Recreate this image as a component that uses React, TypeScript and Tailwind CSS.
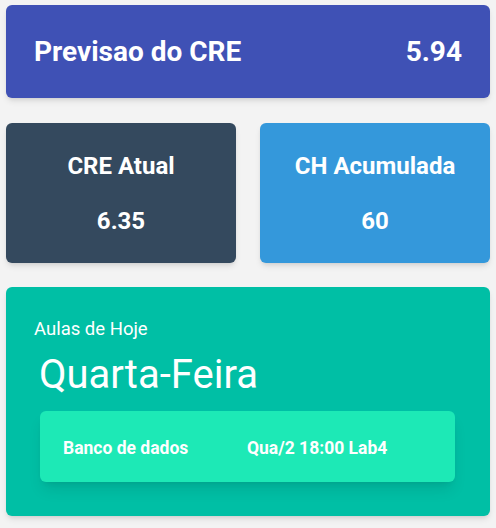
import React from "react";

const aulas = [{ nome: "Banco de dados", horario: "Qua/2 18:00 Lab4" }];

const App: React.FC = () => {
  return (
    <div className="min-h-[528px] w-[496px] bg-[#f3f3f3] px-[6px] pt-[5px] font-['Roboto',sans-serif] text-white">
      <div className="flex h-[93px] items-center justify-between rounded-md bg-[#3f51b5] pl-[28px] pr-[28px] shadow-md">
        <span className="text-[28px] font-bold">Previsao do CRE</span>
        <span className="text-[28px] font-bold">5.94</span>
      </div>

      <div className="mt-[25px] grid grid-cols-2 gap-[24px]">
        <div className="flex h-[140px] flex-col items-center rounded-md bg-[#34495e] pt-[29px] shadow-md">
          <span className="text-[24px] leading-[28px] font-bold">CRE Atual</span>
          <span className="mt-[27px] text-[24px] leading-[28px] font-bold">6.35</span>
        </div>
        <div className="flex h-[140px] flex-col items-center rounded-md bg-[#3498db] pt-[29px] shadow-md">
          <span className="text-[24px] leading-[28px] font-bold">CH Acumulada</span>
          <span className="mt-[27px] text-[24px] leading-[28px] font-bold">60</span>
        </div>
      </div>

      <div className="mt-[24px] h-[229px] rounded-md bg-[#00bfa5] pl-[28px] pr-[35px] pt-[30px] shadow-md">
        <div className="text-[18.5px] leading-[24px]">Aulas de Hoje</div>
        <div className="mt-[10px] pl-[5px] text-[40px] leading-[48px]">Quarta-Feira</div>
        <div className="mt-[12px] ml-[6px] space-y-2">
          {aulas.map((a) => (
            <div
              key={a.nome}
              className="flex h-[71px] items-center rounded-md bg-[#1de9b6] pl-[23px] pt-[3px] text-[17.5px] font-bold shadow-lg"
            >
              <span className="w-[184px]">{a.nome}</span>
              <span>{a.horario}</span>
            </div>
          ))}
        </div>
      </div>
    </div>
  );
};

export default App;
